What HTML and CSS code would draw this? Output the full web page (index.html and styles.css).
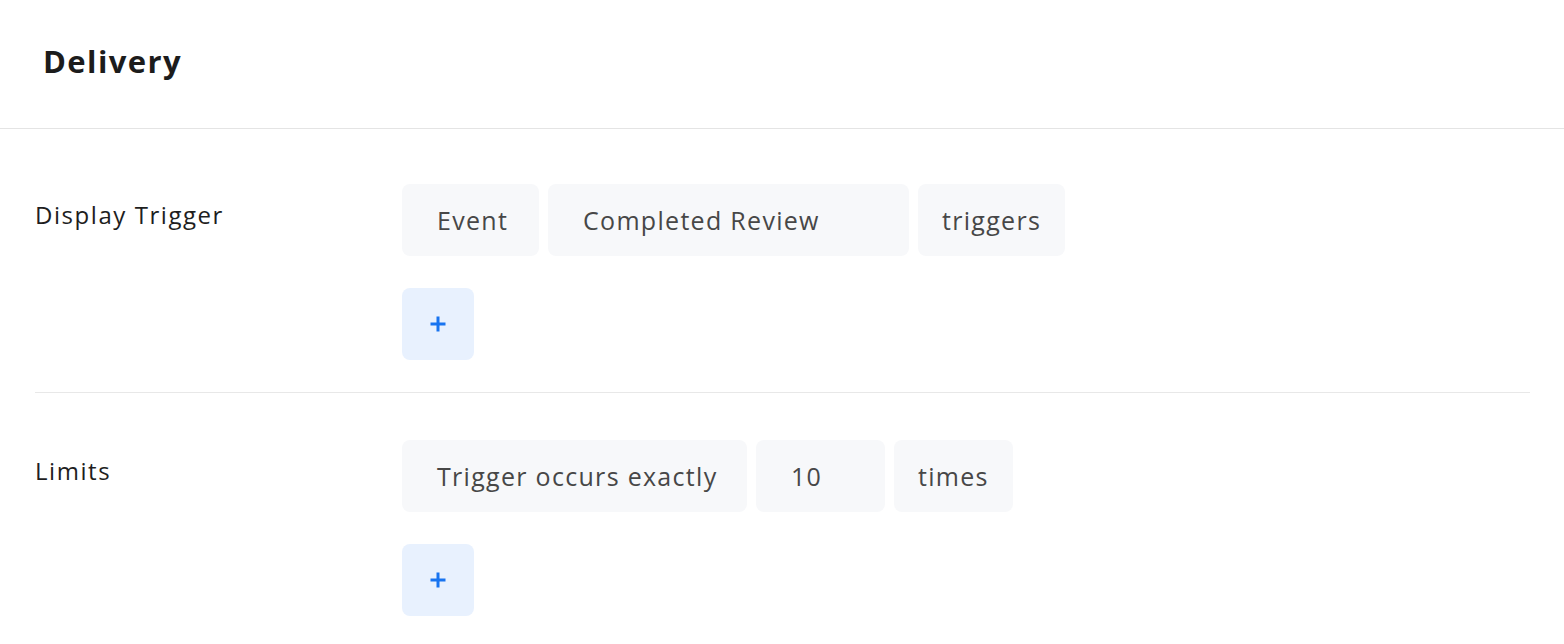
FILE: index.html
```html
<!DOCTYPE html>
<html>
<head>
<meta charset="utf-8">
<link rel="stylesheet" href="styles.css">
</head>
<body>
<div class="page">
  <header class="header">
    <h1 class="title">Delivery</h1>
  </header>
  <section class="rows">
    <div class="row row-first">
      <div class="label">Display Trigger</div>
      <div class="controls">
        <div class="chips">
          <div class="chip chip-select w-event">Event</div>
          <div class="chip chip-select w-review">Completed Review</div>
          <div class="chip chip-static">triggers</div>
        </div>
        <button class="add" type="button" aria-label="Add">
          <svg width="18" height="18" viewBox="0 0 18 18"><path d="M9 1.5v15M1.5 9h15" stroke="#1874f0" stroke-width="3" fill="none"/></svg>
        </button>
      </div>
    </div>
    <div class="row">
      <div class="label">Limits</div>
      <div class="controls">
        <div class="chips">
          <div class="chip chip-select w-occurs">Trigger occurs exactly</div>
          <div class="chip chip-select w-count">10</div>
          <div class="chip chip-static">times</div>
        </div>
        <button class="add" type="button" aria-label="Add">
          <svg width="18" height="18" viewBox="0 0 18 18"><path d="M9 1.5v15M1.5 9h15" stroke="#1874f0" stroke-width="3" fill="none"/></svg>
        </button>
      </div>
    </div>
  </section>
</div>
</body>
</html>
```
FILE: styles.css
```css
* { box-sizing: border-box; }
html, body { margin: 0; padding: 0; background: #fff; }
body {
  font-family: "Open Sans", "Noto Sans", sans-serif;
  color: #1e1e1e;
  width: 1564px;
  height: 644px;
  overflow: hidden;
}
.header {
  height: 129px;
  border-bottom: 1px solid #e4e4e4;
  display: flex;
  align-items: center;
  padding-left: 43px;
  padding-bottom: 7px;
}
.title {
  margin: 0;
  font-size: 31px;
  font-weight: 700;
  color: #1c1c1c;
  letter-spacing: 1.4px;
}
.rows {
  margin: 0 34px 0 35px;
}
.row {
  display: flex;
  padding: 47px 0 32px;
  border-bottom: 1px solid #e8e8e8;
}
.row:last-child { border-bottom: none; }
.row-first { padding-top: 55px; }
.label {
  width: 367px;
  flex: none;
  font-size: 24px;
  line-height: 28px;
  color: #1e1e1e;
  padding-top: 17px;
  letter-spacing: 1.55px;
}
.controls {
  display: flex;
  flex-direction: column;
  gap: 32px;
}
.chips {
  display: flex;
  gap: 9px;
}
.chip {
  height: 72px;
  background: #f7f8fa;
  border-radius: 8px;
  display: flex;
  align-items: center;
  font-size: 25px;
  color: #474747;
  white-space: nowrap;
  letter-spacing: 1.3px;
}
.chip-select { padding: 0 35px; }
.chip-static { padding: 0 24px; }
.w-event { width: 137px; }
.w-review { width: 361px; }
.w-occurs { width: 345px; }
.w-count { width: 129px; }
.add {
  width: 72px;
  height: 72px;
  border: none;
  border-radius: 8px;
  background: #e8f1fe;
  display: flex;
  align-items: center;
  justify-content: center;
  padding: 0;
  cursor: pointer;
}
.add svg { display: block; }
```
